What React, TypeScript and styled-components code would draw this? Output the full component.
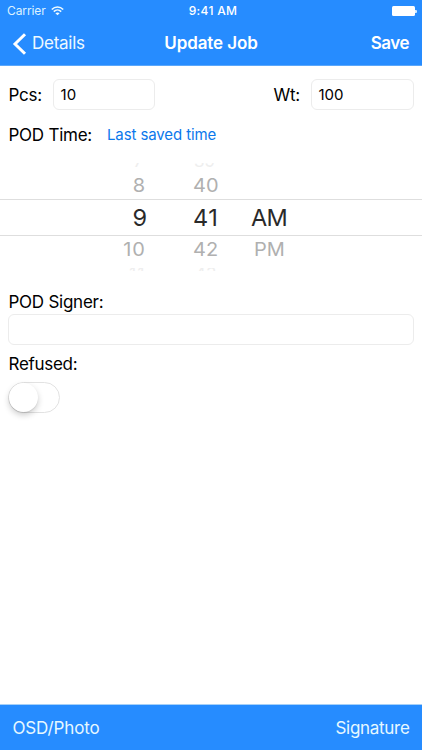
import React from 'react';
import styled, { createGlobalStyle } from 'styled-components';

const Global = createGlobalStyle`
  * { box-sizing: border-box; }
  body { margin: 0; background: #fff; }
`;

const Screen = styled.div`
  width: 422px;
  height: 750px;
  display: flex;
  flex-direction: column;
  background: #fff;
  color: #000;
  font-family: Inter, "Liberation Sans", sans-serif;
  overflow: hidden;
`;

const Header = styled.header`
  height: 66px;
  background: #268cff;
  border-bottom: 1px solid #5aa7fb;
  color: #fff;
`;

const StatusBar = styled.div`
  height: 22px;
  padding: 0 5px 0 7px;
  display: grid;
  grid-template-columns: 1fr auto 1fr;
  align-items: center;
  font-size: 12px;
  line-height: 22px;
`;

const Carrier = styled.div`
  display: flex;
  align-items: center;
  gap: 5px;
  letter-spacing: -0.1px;
  color: #dcf2ff;
`;

const Clock = styled.div`
  font-weight: 500;
  letter-spacing: 0.3px;
  padding-left: 2px;
`;

const Battery = styled.div`
  justify-self: end;
  display: flex;
  align-items: center;
`;

const BatteryBody = styled.div`
  width: 23px;
  height: 10px;
  border-radius: 1.5px;
  background: #fff;
`;

const BatteryTip = styled.div`
  width: 2px;
  height: 3px;
  border-radius: 0 1px 1px 0;
  background: #d5ecff;
`;

const NavBar = styled.nav`
  height: 43px;
  padding: 0 13px 0 12px;
  display: grid;
  grid-template-columns: 1fr auto 1fr;
  align-items: center;
  font-size: 17px;
  line-height: 43px;
`;

const BackLink = styled.a`
  display: flex;
  align-items: center;
  gap: 5px;
  letter-spacing: -0.25px;
  color: #eef9ff;
`;

const Title = styled.div`
  font-weight: 600;
  letter-spacing: -0.1px;
  padding-left: 1px;
`;

const SaveLink = styled.a`
  justify-self: end;
  font-weight: 600;
  font-size: 17px;
  letter-spacing: -0.5px;
`;

const Form = styled.main`
  flex: 1;
  display: flex;
  flex-direction: column;
`;

const FieldRow = styled.div`
  display: flex;
  justify-content: space-between;
  padding: 13px 8px 0 8.5px;
`;

const Field = styled.div`
  display: flex;
  align-items: center;
  gap: 11px;
`;

const Label = styled.div<{ $tight?: number }>`
  font-size: 17px;
  line-height: 24px;
  letter-spacing: ${(p) => -(p.$tight ?? 0.25)}px;
  white-space: nowrap;
`;

const TextBox = styled.div<{ $width: string }>`
  width: ${(p) => p.$width};
  height: 31px;
  padding: 0 6.5px;
  border: 1px solid #ececec;
  border-radius: 6px;
  font-size: 15px;
  line-height: 30px;
`;

const TimeRow = styled.div`
  display: flex;
  align-items: center;
  gap: 15px;
  height: 24px;
  margin-top: 13px;
  padding-left: 8.5px;
`;

const SavedTime = styled.a`
  color: #0b78ec;
  font-size: 15px;
  line-height: 24px;
  letter-spacing: -0.1px;
`;

const Picker = styled.div`
  display: flex;
  flex-direction: column;
  height: 109px;
  margin-top: 16px;
`;

const PickerRow = styled.div<{ $kind: 'edge' | 'near' | 'selected' }>`
  flex-shrink: 0;
  display: grid;
  grid-template-columns: 147px 46px 58px 1fr;
  white-space: nowrap;
  ${({ $kind }) => {
    switch ($kind) {
      case 'selected':
        return 'height: 37px; border: solid #dedede; border-width: 1px 0; font-size: 23.5px; line-height: 35px; color: #2a2a2a;';
      case 'near':
        return 'height: 27px; font-size: 20px; line-height: 28px; color: #b0b0b0;';
      default:
        return 'height: 12px; font-size: 17px; line-height: 12px; color: #eee;';
    }
  }}
`;

const Hour = styled.div<{ $inset?: number; $spacing?: number }>`
  grid-column: 1;
  text-align: right;
  padding-right: ${(p) => p.$inset ?? 0}px;
  letter-spacing: ${(p) => p.$spacing ?? 0}px;
`;

const Minute = styled.div<{ $inset?: number; $spacing?: number }>`
  grid-column: 3;
  padding-left: ${(p) => p.$inset ?? 0}px;
  letter-spacing: ${(p) => p.$spacing ?? 0}px;
`;

const Period = styled.div<{ $inset?: number; $spacing?: number }>`
  grid-column: 4;
  padding-left: ${(p) => p.$inset ?? 0}px;
  letter-spacing: ${(p) => p.$spacing ?? 0}px;
`;

const EdgeAbove = styled.div`
  display: flex;
  flex-direction: column;
  justify-content: flex-end;
  height: 4px;
  margin-bottom: 5px;
  overflow: hidden;
`;

const EdgeBelow = styled.div`
  height: 3px;
  margin-top: 5px;
  overflow: hidden;
`;

const Squash = styled.div`
  transform: scaleY(0.93);
`;

const Section = styled.section`
  padding: 0 8px;
`;

const SignerSection = styled(Section)`
  margin-top: 18px;
`;

const RefusedSection = styled(Section)`
  margin-top: 7px;
`;

const SectionLabel = styled(Label)`
  padding-left: 0.5px;
`;

const Switch = styled.div`
  width: 52px;
  height: 31px;
  margin-top: 6px;
  border: 1.5px solid #e2e2e2;
  border-radius: 16px;
  background: #fff;
`;

const Knob = styled.div`
  width: 29px;
  height: 29px;
  border-radius: 50%;
  background: #fff;
  box-shadow: 0 3px 6px rgba(0, 0, 0, 0.2), 0 1px 1px rgba(0, 0, 0, 0.08);
`;

const Toolbar = styled.footer`
  height: 46px;
  padding: 0 12.5px;
  display: flex;
  justify-content: space-between;
  align-items: center;
  border-top: 1px solid #a5d0f8;
  background: #268cff;
  color: #e6f8ff;
  font-size: 17px;
`;

const ToolbarAction = styled.a<{ $tight: number }>`
  letter-spacing: ${(p) => -p.$tight}px;
`;

function WifiIcon() {
  return (
    <svg width="13" height="10" viewBox="0 0 13 10" fill="none" stroke="#eefaff" strokeWidth="1.6">
      <path d="M0.8 3.5 C4 0.2 9 0.2 12.2 3.5" />
      <path d="M2.8 5.6 C4.9 3.5 8.1 3.5 10.2 5.6" />
      <path d="M6.5 9.3 L4.4 7.2 C5.6 6.1 7.4 6.1 8.6 7.2 Z" fill="#eefaff" stroke="none" />
    </svg>
  );
}

function BackIcon() {
  return (
    <svg width="15" height="22" viewBox="0 0 15 22" fill="none" stroke="#fff" strokeWidth="3">
      <path d="M13 1.2 L3 11 L13 20.8" />
    </svg>
  );
}

export default function App() {
  return (
    <Screen>
      <Global />
      <Header>
        <StatusBar>
          <Carrier>
            Carrier
            <WifiIcon />
          </Carrier>
          <Clock>9:41 AM</Clock>
          <Battery>
            <BatteryBody />
            <BatteryTip />
          </Battery>
        </StatusBar>
        <NavBar>
          <BackLink>
            <BackIcon />
            Details
          </BackLink>
          <Title>Update Job</Title>
          <SaveLink>Save</SaveLink>
        </NavBar>
      </Header>

      <Form>
        <FieldRow>
          <Field>
            <Label $tight={0.2}>Pcs:</Label>
            <TextBox $width="102px">10</TextBox>
          </Field>
          <Field>
            <Label $tight={0.2}>Wt:</Label>
            <TextBox $width="103px">100</TextBox>
          </Field>
        </FieldRow>

        <TimeRow>
          <Label>POD Time:</Label>
          <SavedTime>Last saved time</SavedTime>
        </TimeRow>

        <Picker>
          <EdgeAbove>
            <PickerRow $kind="edge">
              <Hour $inset={4}>7</Hour>
              <Minute $inset={1}>39</Minute>
            </PickerRow>
          </EdgeAbove>
          <Squash>
            <PickerRow $kind="near">
              <Hour $inset={2}>8</Hour>
              <Minute>40</Minute>
            </PickerRow>
          </Squash>
          <PickerRow $kind="selected">
            <Hour>9</Hour>
            <Minute $spacing={0.6}>41</Minute>
            <Period $spacing={-0.6}>AM</Period>
          </PickerRow>
          <Squash>
            <PickerRow $kind="near">
              <Hour $inset={1} $spacing={1}>10</Hour>
              <Minute>42</Minute>
              <Period $inset={3}>PM</Period>
            </PickerRow>
          </Squash>
          <EdgeBelow>
            <PickerRow $kind="edge">
              <Hour $inset={1} $spacing={1.5}>11</Hour>
              <Minute $inset={2}>43</Minute>
            </PickerRow>
          </EdgeBelow>
        </Picker>

        <SignerSection>
          <SectionLabel>POD Signer:</SectionLabel>
          <TextBox $width="406px" />
        </SignerSection>

        <RefusedSection>
          <SectionLabel $tight={0.3}>Refused:</SectionLabel>
          <Switch>
            <Knob />
          </Switch>
        </RefusedSection>
      </Form>

      <Toolbar>
        <ToolbarAction $tight={0.15}>OSD/Photo</ToolbarAction>
        <ToolbarAction $tight={0.3}>Signature</ToolbarAction>
      </Toolbar>
    </Screen>
  );
}
